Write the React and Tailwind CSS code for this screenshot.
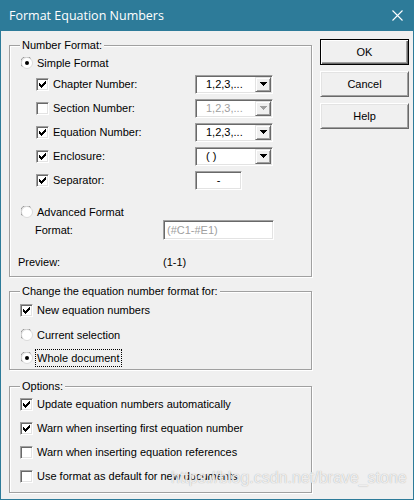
import React from "react";

// classic win32 sunken field (textbox / combo / checkbox)
const sunken =
  "border border-t-[#a0a0a0] border-l-[#a0a0a0] border-b-white border-r-white bg-white shadow-[inset_1px_1px_0_#696969,inset_-1px_-1px_0_#e3e3e3]";

function Check({ checked }) {
  return (
    <span className={`flex h-[13px] w-[13px] shrink-0 items-center justify-center ${sunken}`}>
      {checked && (
        <svg width="7" height="7" viewBox="0 0 7 7" shapeRendering="crispEdges">
          <path
            d="M0 2h1v3H0zM1 3h1v3H1zM2 4h1v3H2zM3 3h1v3H3zM4 2h1v3H4zM5 1h1v3H5zM6 0h1v3H6z"
            fill="#000"
          />
        </svg>
      )}
    </span>
  );
}

function Radio({ on }) {
  return (
    <svg width="12" height="12" viewBox="0 0 12 12" className="shrink-0">
      <circle cx="6" cy="6" r="5.5" fill="#fff" stroke="#dadada" />
      <path d="M1.3 9.6 A5.5 5.5 0 0 1 9.6 1.3" fill="none" stroke="#9a9a9a" />
      {on && <circle cx="6" cy="6" r="2" fill="#000" />}
    </svg>
  );
}

function Arrow({ disabled }) {
  return (
    <span className="my-[1px] mr-[1px] flex w-[16px] items-center justify-center border border-t-[#e3e3e3] border-l-[#e3e3e3] border-b-[#696969] border-r-[#696969] bg-[#f0f0f0] shadow-[inset_1px_1px_0_#fff,inset_-1px_-1px_0_#a0a0a0]">
      <svg width="7" height="4" viewBox="0 0 7 4" shapeRendering="crispEdges">
        <path d="M0 0h7v1H0zM1 1h5v1H1zM2 2h3v1H2zM3 3h1v1H3z" fill={disabled ? "#a0a0a0" : "#000"} />
      </svg>
    </span>
  );
}

function Combo({ value, disabled }) {
  return (
    <div className={`flex h-[19px] w-[78px] ${sunken}`}>
      <span className={`flex-1 pl-[10px] leading-[17px] ${disabled ? "text-[#a0a0a0]" : "text-black"}`}>
        {value}
      </span>
      <Arrow disabled={disabled} />
    </div>
  );
}

function OptRow({ checked, label, children }) {
  return (
    <div className="flex h-[24px] items-center pl-[26px]">
      <Check checked={checked} />
      <span className="ml-[4px] w-[142px]">{label}</span>
      {children}
    </div>
  );
}

function Group({ title, className, children }) {
  return (
    <div className={`relative border border-[#a0a0a0] shadow-[1px_1px_0_#fff,inset_1px_1px_0_#fff] ${className}`}>
      <span className="absolute left-[10px] top-[-8px] bg-[#f0f0f0] px-[2px] leading-[14px]">{title}</span>
      {children}
    </div>
  );
}

function Button({ children, isDefault }) {
  return (
    <button
      className={
        isDefault
          ? "h-[26px] w-[89px] border border-black bg-[#f0f0f0] shadow-[inset_1px_1px_0_#fff,inset_-1px_-1px_0_#696969,inset_-2px_-2px_0_#a0a0a0]"
          : "h-[26px] w-[89px] border border-t-white border-l-white border-b-[#696969] border-r-[#696969] bg-[#f0f0f0] shadow-[inset_1px_1px_0_#e3e3e3,inset_-1px_-1px_0_#a0a0a0]"
      }
    >
      {children}
    </button>
  );
}

export default function App() {
  return (
    <div className="relative flex h-[500px] w-[414px] flex-col border-x border-b border-[#2d7b99] bg-[#f0f0f0] font-['Liberation_Sans',Arial,sans-serif] text-[11px] leading-[14px] text-black">
      {/* title bar */}
      <div className="flex h-[31px] shrink-0 items-center justify-between bg-[#2d7b99] pl-[8px] pr-[10px]">
        <span className="font-['Open_Sans',sans-serif] text-[12.5px] text-white">Format Equation Numbers</span>
        <svg width="11" height="11" viewBox="0 0 11 11">
          <path d="M0.5 0.5 L10.5 10.5 M10.5 0.5 L0.5 10.5" stroke="#fff" strokeWidth="1.1" />
        </svg>
      </div>

      <div className="flex pl-[8px]">
        {/* left column */}
        <div className="w-[303px] pt-[14px]">
          <Group title="Number Format:" className="pb-[6px]">
            <div className="flex h-[19px] items-center pl-[11px] mt-[7px]">
              <Radio on />
              <span className="ml-[4px]">Simple Format</span>
            </div>
            <OptRow checked label="Chapter Number:">
              <Combo value="1,2,3,..." />
            </OptRow>
            <OptRow label="Section Number:">
              <Combo value="1,2,3,..." disabled />
            </OptRow>
            <OptRow checked label="Equation Number:">
              <Combo value="1,2,3,..." />
            </OptRow>
            <OptRow checked label="Enclosure:">
              <Combo value="( )" />
            </OptRow>
            <OptRow checked label="Separator:">
              <div className={`h-[19px] w-[47px] text-center leading-[17px] ${sunken}`}>-</div>
            </OptRow>

            <div className="mt-[12px] flex h-[16px] items-center pl-[11px]">
              <Radio />
              <span className="ml-[4px]">Advanced Format</span>
            </div>
            <div className="flex h-[20px] items-center pl-[25px]">
              <span className="w-[128px]">Format:</span>
              <div className={`h-[20px] w-[111px] pl-[3px] leading-[18px] text-[#a0a0a0] ${sunken}`}>(#C1-#E1)</div>
            </div>
            <div className="mt-[13px] flex h-[17px] items-center pl-[8px]">
              <span className="w-[145px]">Preview:</span>
              <span>(1-1)</span>
            </div>
          </Group>

          <Group title="Change the equation number format for:" className="mt-[14px]">
            <div className="mt-[6px] flex h-[24px] items-center pl-[10px]">
              <Check checked />
              <span className="ml-[4px]">New equation numbers</span>
            </div>
            <div className="mt-[1px] flex h-[24px] items-center pl-[11px]">
              <Radio />
              <span className="ml-[4px]">Current selection</span>
            </div>
            <div className="flex h-[22px] items-center pl-[11px]">
              <Radio on />
              <span className="ml-[2px] border border-dotted border-black px-[1px] leading-[16px]">Whole document</span>
            </div>
          </Group>

          <Group title="Options:" className="mt-[16px] pb-[4px]">
            <div className="mt-[5px]">
              {[
                [true, "Update equation numbers automatically"],
                [true, "Warn when inserting first equation number"],
                [false, "Warn when inserting equation references"],
                [false, "Use format as default for new documents"],
              ].map(([c, t]) => (
                <div key={t} className="flex h-[24px] items-center pl-[10px]">
                  <Check checked={c} />
                  <span className="ml-[4px]">{t}</span>
                </div>
              ))}
            </div>
          </Group>
        </div>

        {/* buttons */}
        <div className="ml-[8px] flex flex-col gap-[6px] pt-[8px]">
          <Button isDefault>OK</Button>
          <Button>Cancel</Button>
          <Button>Help</Button>
        </div>
      </div>

      {/* watermark */}
      <span className="pointer-events-none absolute left-[170px] top-[469px] font-['Liberation_Sans',Arial,sans-serif] text-[16px] leading-[18px] text-white/80 [text-shadow:0_0_1px_#9a9a9a]">
        https://blog.csdn.net/brave_stone
      </span>
    </div>
  );
}
